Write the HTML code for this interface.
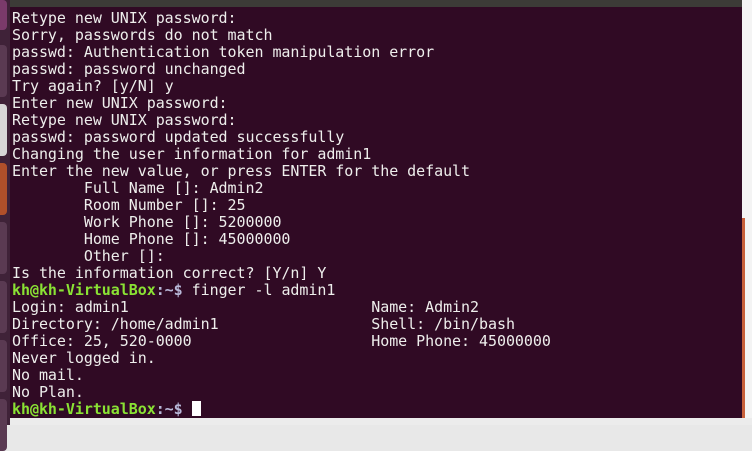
<!DOCTYPE html>
<html><head><style>
html,body{margin:0;padding:0;width:752px;height:425px;overflow:hidden;background:#e8e8e8;}
#launch{position:absolute;left:0;top:0;width:10px;height:425px;background:#3f2238;}
.tile{position:absolute;left:0;width:7px;height:52px;border-radius:0 4px 4px 0;background:#5a3a52;}
#title{position:absolute;left:10px;top:0;width:740px;height:7px;background:#3c3b37;}
#right{position:absolute;left:742px;top:0;width:10px;height:425px;background:#f4f4f4;}
#term{position:absolute;left:10px;top:7px;width:732px;height:411px;background:#300a24;}
pre{margin:0;position:absolute;left:12px;top:10px;font-family:"DejaVu Sans Mono","Liberation Mono",monospace;font-size:15px;line-height:17px;color:#eeeeec;letter-spacing:-0.05px;}
.g{color:#8ae234;font-weight:bold}.b{color:#b8b8d8;font-weight:bold}
.cur{display:inline-block;width:9px;height:15px;background:#fff;vertical-align:-2px}
#bot{position:absolute;left:10px;top:418px;width:742px;height:7px;background:#ececec;}
</style></head><body>
<div id="launch">
<div class="tile" style="top:0;height:30px;background:#7a3a6a"></div>
<div class="tile" style="top:45px"></div>
<div class="tile" style="top:104px;background:#d8d8d8"></div>
<div class="tile" style="top:163px;background:#b0502a"></div>
<div class="tile" style="top:222px"></div>
<div class="tile" style="top:281px"></div>
<div class="tile" style="top:340px"></div>
<div class="tile" style="top:399px"></div>
</div>
<div id="title"></div>
<div id="right"><div style="position:absolute;left:0;top:218px;width:3px;height:200px;background:#c8603a"></div></div>
<div id="term"></div>
<pre>Retype new UNIX password:
Sorry, passwords do not match
passwd: Authentication token manipulation error
passwd: password unchanged
Try again? [y/N] y
Enter new UNIX password:
Retype new UNIX password:
passwd: password updated successfully
Changing the user information for admin1
Enter the new value, or press ENTER for the default
        Full Name []: Admin2
        Room Number []: 25
        Work Phone []: 5200000
        Home Phone []: 45000000
        Other []:
Is the information correct? [Y/n] Y
<span class="g">kh@kh-VirtualBox</span><span class="b">:~$</span> finger -l admin1
Login: admin1                           Name: Admin2
Directory: /home/admin1                 Shell: /bin/bash
Office: 25, 520-0000                    Home Phone: 45000000
Never logged in.
No mail.
No Plan.
<span class="g">kh@kh-VirtualBox</span><span class="b">:~$</span> <span class="cur"></span></pre>
<div id="bot"></div>
</body></html>
